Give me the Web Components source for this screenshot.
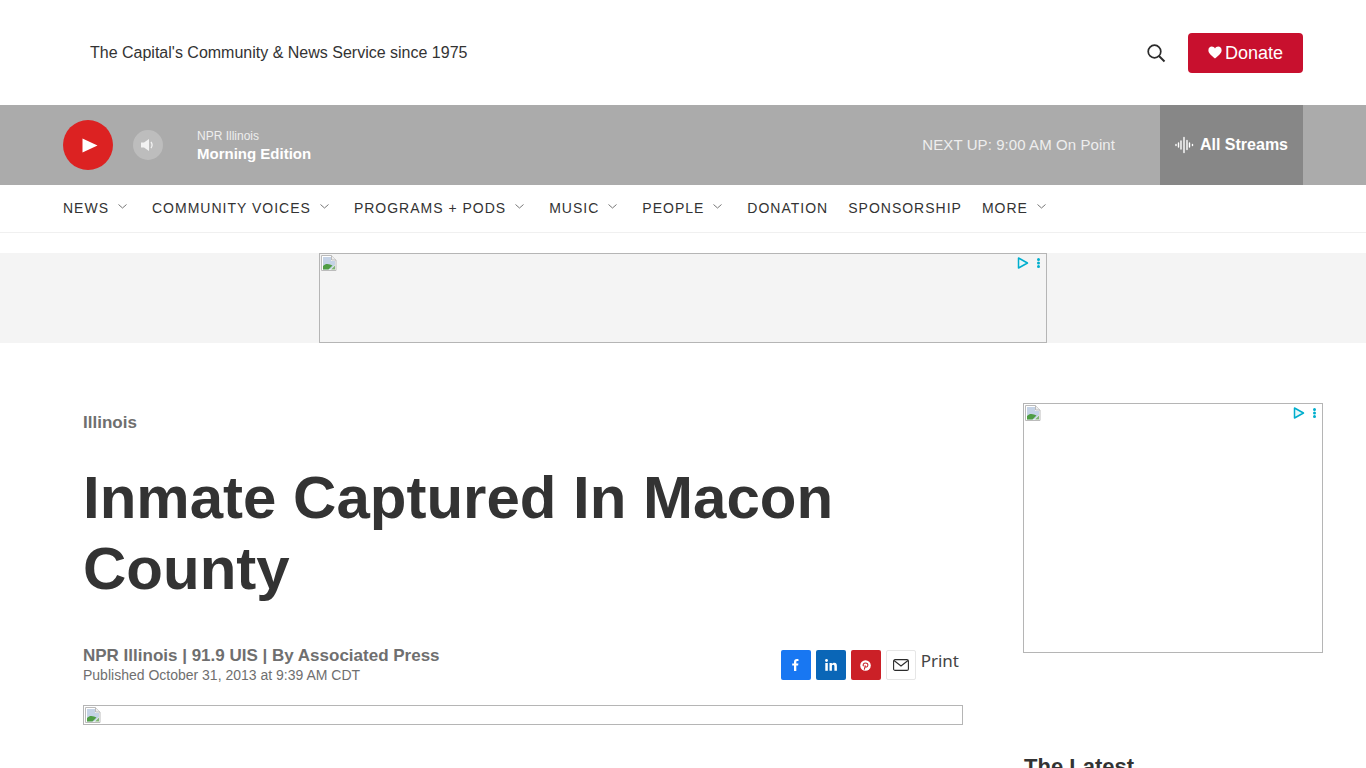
<!DOCTYPE html>
<html lang="en">
<head>
<meta charset="utf-8">
<title>Inmate Captured In Macon County</title>
<style>
  html, body { margin: 0; height: 768px; overflow: hidden; background: #fff; }
  body { font-family: "Liberation Sans", Arial, sans-serif; color: #333; }
</style>
</head>
<body>
<site-header></site-header>
<player-bar></player-bar>
<site-nav></site-nav>
<top-ad></top-ad>
<page-main>
  <news-article></news-article>
  <side-rail slot="rail"></side-rail>
</page-main>

<script>
const brokenImage = `
  <svg class="broken" width="16" height="16" viewBox="0 0 16 16">
    <path d="M.5 .5h10l4.500 4.500v10.500H.5z" fill="#fff" stroke="#bbb"/>
    <path d="M10.500 .5v4.500h4.500" fill="#eee" stroke="#bbb"/>
    <path d="M2 2h8v4h4v4l-4.500 4.500H2z" fill="#c5d3e6"/>
    <path d="M2 11c2-2.500 5-2.500 7-1.500l2.500 1-4 4H2z" fill="#4f9d44"/>
    <path d="M10 14.500l4-4v4z" fill="#7fb374"/>
  </svg>`;

const adMark = `
  <svg class="mark" width="30" height="14" viewBox="0 0 30 14">
    <path d="M2.500 2v10l9-5z" fill="#e6f7fa" stroke="#00aecd" stroke-width="1.500" stroke-linejoin="round"/>
    <circle cx="22.500" cy="3.500" r="1.500" fill="#00aecd"/>
    <circle cx="22.500" cy="7" r="1.500" fill="#00aecd"/>
    <circle cx="22.500" cy="10.500" r="1.500" fill="#00aecd"/>
  </svg>`;

class SiteHeader extends HTMLElement {
  constructor() {
    super();
    this.attachShadow({ mode: 'open' });
    this.shadowRoot.innerHTML = `
      <style>
        :host { display: flex; align-items: center; height: 105px; padding: 0 63px 0 90px; box-sizing: border-box; }
        .tag { font-size: 16px; color: #333; flex: 1; }
        .search { display: flex; margin-right: 22px; }
        .donate { display: flex; align-items: center; justify-content: center; gap: 3px; width: 115px; height: 40px; padding-top: 2px; box-sizing: border-box; background: #c8102e; color: #fff; border-radius: 4px; font-size: 18px; }
        .donate svg { margin-top: -2px; }
      </style>
      <span class="tag">The Capital's Community &amp; News Service since 1975</span>
      <span class="search">
        <svg width="20" height="20" viewBox="0 0 20 20" fill="none" stroke="#2b2b2b" stroke-width="1.700">
          <circle cx="8.500" cy="8.500" r="6.300"/><path d="M13 13l5.500 5.500" stroke-width="2"/>
        </svg>
      </span>
      <span class="donate">
        <svg width="14" height="13" viewBox="0 0 14 13"><path d="M7 12.600C2.500 8.800.4 6.900.4 4.200.4 2 2 .6 3.800.6 5.100.6 6.300 1.300 7 2.500 7.700 1.300 8.900.6 10.200.6 12 .6 13.600 2 13.600 4.200c0 2.700-2.100 4.600-6.600 8.400z" fill="#fff"/></svg>
        Donate
      </span>`;
  }
}

class PlayerBar extends HTMLElement {
  constructor() {
    super();
    this.attachShadow({ mode: 'open' });
    this.shadowRoot.innerHTML = `
      <style>
        :host { display: flex; align-items: center; height: 80px; padding: 0 63px; background: #ababab; color: #fff; }
        .play { width: 50px; height: 50px; border-radius: 50%; background: #dc2222; display: flex; align-items: center; justify-content: center; }
        .play svg { margin-left: 4px; }
        .vol { width: 30px; height: 30px; margin-left: 20px; border-radius: 50%; background: #bdbdbd; display: flex; align-items: center; justify-content: center; }
        .now { margin-left: 34px; display: flex; flex-direction: column; padding-top: 2px; }
        .station { font-size: 12px; line-height: 14px; color: #eee; }
        .show { font-size: 15px; line-height: 18px; font-weight: 700; margin-top: 2px; }
        .next { margin-left: auto; margin-right: 45px; padding-bottom: 2px; font-size: 15px; letter-spacing: .08px; color: #eee; }
        .streams { width: 143px; height: 80px; background: #878787; display: flex; align-items: center; justify-content: center; gap: 6px; font-size: 16px; font-weight: 700; }
      </style>
      <span class="play"><svg width="16" height="15" viewBox="0 0 16 15"><path d="M.5 .5l15 7-15 7z" fill="#fff"/></svg></span>
      <span class="vol">
        <svg width="16" height="14" viewBox="0 0 16 14" fill="#f2f2f2">
          <path d="M1 4.500h3L9 1v12L4 9.500H1z"/>
          <path d="M11 4c1.300 1.800 1.300 4.200 0 6" fill="none" stroke="#f2f2f2" stroke-width="1.300"/>
        </svg>
      </span>
      <span class="now">
        <span class="station">NPR Illinois</span>
        <span class="show">Morning Edition</span>
      </span>
      <span class="next">NEXT UP: 9:00 AM On Point</span>
      <span class="streams">
        <svg width="19" height="18" viewBox="0 0 19 18" stroke="#fff" stroke-width="1.400" stroke-linecap="round">
          <path d="M1 8.500v1M3.500 7v4M6 5v8M9 1.500v15M12 4.500v9M14.500 7v4M17.500 8.500v1"/>
        </svg>
        All Streams
      </span>`;
  }
}

class NavItem extends HTMLElement {
  constructor() {
    super();
    this.attachShadow({ mode: 'open' });
    const hasMenu = this.hasAttribute('menu');
    this.shadowRoot.innerHTML = `
      <style>
        :host { display: flex; align-items: center; font-size: 14px; letter-spacing: 1px; color: #333; margin-right: 20px; }
        :host([menu]) { margin-right: 25px; }
        svg { margin-left: 9px; margin-top: -2px; }
      </style>
      <slot></slot>
      ${hasMenu ? `<svg width="9" height="5" viewBox="0 0 9 5" fill="none" stroke="#777"><path d="M.5 .5l4 3.500 4-3.500"/></svg>` : ''}`;
  }
}

class SiteNav extends HTMLElement {
  constructor() {
    super();
    this.attachShadow({ mode: 'open' });
    this.shadowRoot.innerHTML = `
      <style>
        :host { display: flex; align-items: center; height: 45px; padding: 0 63px 2px; border-bottom: 1px solid #f0f0f0; }
      </style>
      <nav-item menu>NEWS</nav-item>
      <nav-item menu>COMMUNITY VOICES</nav-item>
      <nav-item menu>PROGRAMS + PODS</nav-item>
      <nav-item menu>MUSIC</nav-item>
      <nav-item menu>PEOPLE</nav-item>
      <nav-item>DONATION</nav-item>
      <nav-item>SPONSORSHIP</nav-item>
      <nav-item menu>MORE</nav-item>`;
  }
}

class AdSlot extends HTMLElement {
  constructor() {
    super();
    this.attachShadow({ mode: 'open' });
    this.shadowRoot.innerHTML = `
      <style>
        :host { display: block; box-sizing: border-box; border: 1px solid #b5b5b5; position: relative; }
        .broken { display: block; margin: 1px 0 0 1px; }
        .mark { position: absolute; top: 2px; right: 0; }
      </style>
      ${brokenImage}${adMark}`;
  }
}

class TopAd extends HTMLElement {
  constructor() {
    super();
    this.attachShadow({ mode: 'open' });
    this.shadowRoot.innerHTML = `
      <style>
        :host { display: flex; justify-content: center; height: 90px; margin-top: 20px; background: #f4f4f4; }
        ad-slot { width: 728px; height: 90px; }
      </style>
      <ad-slot></ad-slot>`;
  }
}

class PageMain extends HTMLElement {
  constructor() {
    super();
    this.attachShadow({ mode: 'open' });
    this.shadowRoot.innerHTML = `
      <style>
        :host { display: flex; justify-content: space-between; padding: 60px 43px 0 83px; }
      </style>
      <slot></slot>
      <slot name="rail"></slot>`;
  }
}

class ShareTools extends HTMLElement {
  constructor() {
    super();
    this.attachShadow({ mode: 'open' });
    this.shadowRoot.innerHTML = `
      <style>
        :host { display: flex; gap: 5px; }
        .b { width: 30px; height: 30px; border-radius: 2px; display: flex; align-items: center; justify-content: center; box-sizing: border-box; }
        .fb { background: #1877f2; } .li { background: #0a66b7; } .pin { background: #cb2027; }
        .mail { border: 1px solid #e6e6e6; }
        .print { font-family: "Noto Sans", "Open Sans", sans-serif; font-size: 17px; line-height: 22px; color: #444; }
      </style>
      <span class="b fb"><svg width="7" height="12" viewBox="0 0 7 12"><path d="M2 12V6.600H.2V4.500H2V3c0-1.900 1.100-2.900 2.800-2.900.8 0 1.500.1 1.700.1v1.900H5.400c-.9 0-1.100.4-1.100 1.100v1.300h2.100l-.3 2.100H4.300V12z" fill="#fff"/></svg></span>
      <span class="b li"><svg width="12" height="12" viewBox="0 0 12 12" fill="#fff"><rect x=".3" y="4" width="2.500" height="7.800"/><circle cx="1.500" cy="1.500" r="1.400"/><path d="M4.500 4h2.400v1.100C7.300 4.400 8.200 3.800 9.300 3.800c2.200 0 2.600 1.500 2.600 3.400v4.600H9.400V7.700c0-1 0-2-1.200-2s-1.300.9-1.300 1.900v4.200H4.500z"/></svg></span>
      <span class="b pin"><svg width="11" height="11" viewBox="0 0 11 11"><circle cx="5.500" cy="5.500" r="5.300" fill="#fff"/><path d="M4.300 9.700l1-4.300M3.500 6.300c-1-1.500.1-3.300 2-3.300 1.700 0 2.600 1.100 2.300 2.500-.3 1.500-1.700 2-2.600 1.100" fill="none" stroke="#cb2027" stroke-width="1.100"/></svg></span>
      <span class="b mail"><svg width="16" height="12" viewBox="0 0 16 12" fill="none" stroke="#2b2b2b" stroke-width="1.100"><rect x=".6" y=".6" width="14.800" height="10.800" rx="1.500"/><path d="M1 1.500l7 5.500 7-5.500"/></svg></span>
      <span class="print">Print</span>`;
  }
}

class NewsArticle extends HTMLElement {
  constructor() {
    super();
    this.attachShadow({ mode: 'open' });
    this.shadowRoot.innerHTML = `
      <style>
        :host { display: block; width: 880px; }
        .section { font-size: 17px; line-height: 20px; font-weight: 700; color: #6f6f6f; margin-top: 10px; }
        h1 { margin: 29px 0 0; font-size: 60px; line-height: 71px; font-weight: 700; color: #333; }
        .meta { display: flex; justify-content: space-between; margin-top: 42px; height: 59px; }
        .by { font-size: 17px; line-height: 20px; font-weight: 700; color: #6f6f6f; }
        .date { font-size: 14px; line-height: 16px; margin-top: 1px; color: #6f6f6f; }
        .tools { margin-top: 4px; padding-right: 4px; }
        .image { height: 20px; box-sizing: border-box; border: 1px solid #b5b5b5; }
        .broken { display: block; margin: 1px 0 0 1px; }
      </style>
      <div class="section">Illinois</div>
      <h1>Inmate Captured In Macon County</h1>
      <div class="meta">
        <div>
          <div class="by">NPR Illinois | 91.9 UIS | By Associated Press</div>
          <div class="date">Published October 31, 2013 at 9:39 AM CDT</div>
        </div>
        <div class="tools"><share-tools></share-tools></div>
      </div>
      <div class="image">${brokenImage}</div>`;
  }
}

class SideRail extends HTMLElement {
  constructor() {
    super();
    this.attachShadow({ mode: 'open' });
    this.shadowRoot.innerHTML = `
      <style>
        :host { display: block; width: 300px; }
        ad-slot { height: 250px; }
        h2 { margin: 102px 0 0 1px; font-size: 22px; line-height: 24px; font-weight: 700; color: #333; }
      </style>
      <ad-slot></ad-slot>
      <h2>The Latest</h2>`;
  }
}

customElements.define('site-header', SiteHeader);
customElements.define('player-bar', PlayerBar);
customElements.define('nav-item', NavItem);
customElements.define('site-nav', SiteNav);
customElements.define('ad-slot', AdSlot);
customElements.define('top-ad', TopAd);
customElements.define('page-main', PageMain);
customElements.define('share-tools', ShareTools);
customElements.define('news-article', NewsArticle);
customElements.define('side-rail', SideRail);
</script>
</body>
</html>
